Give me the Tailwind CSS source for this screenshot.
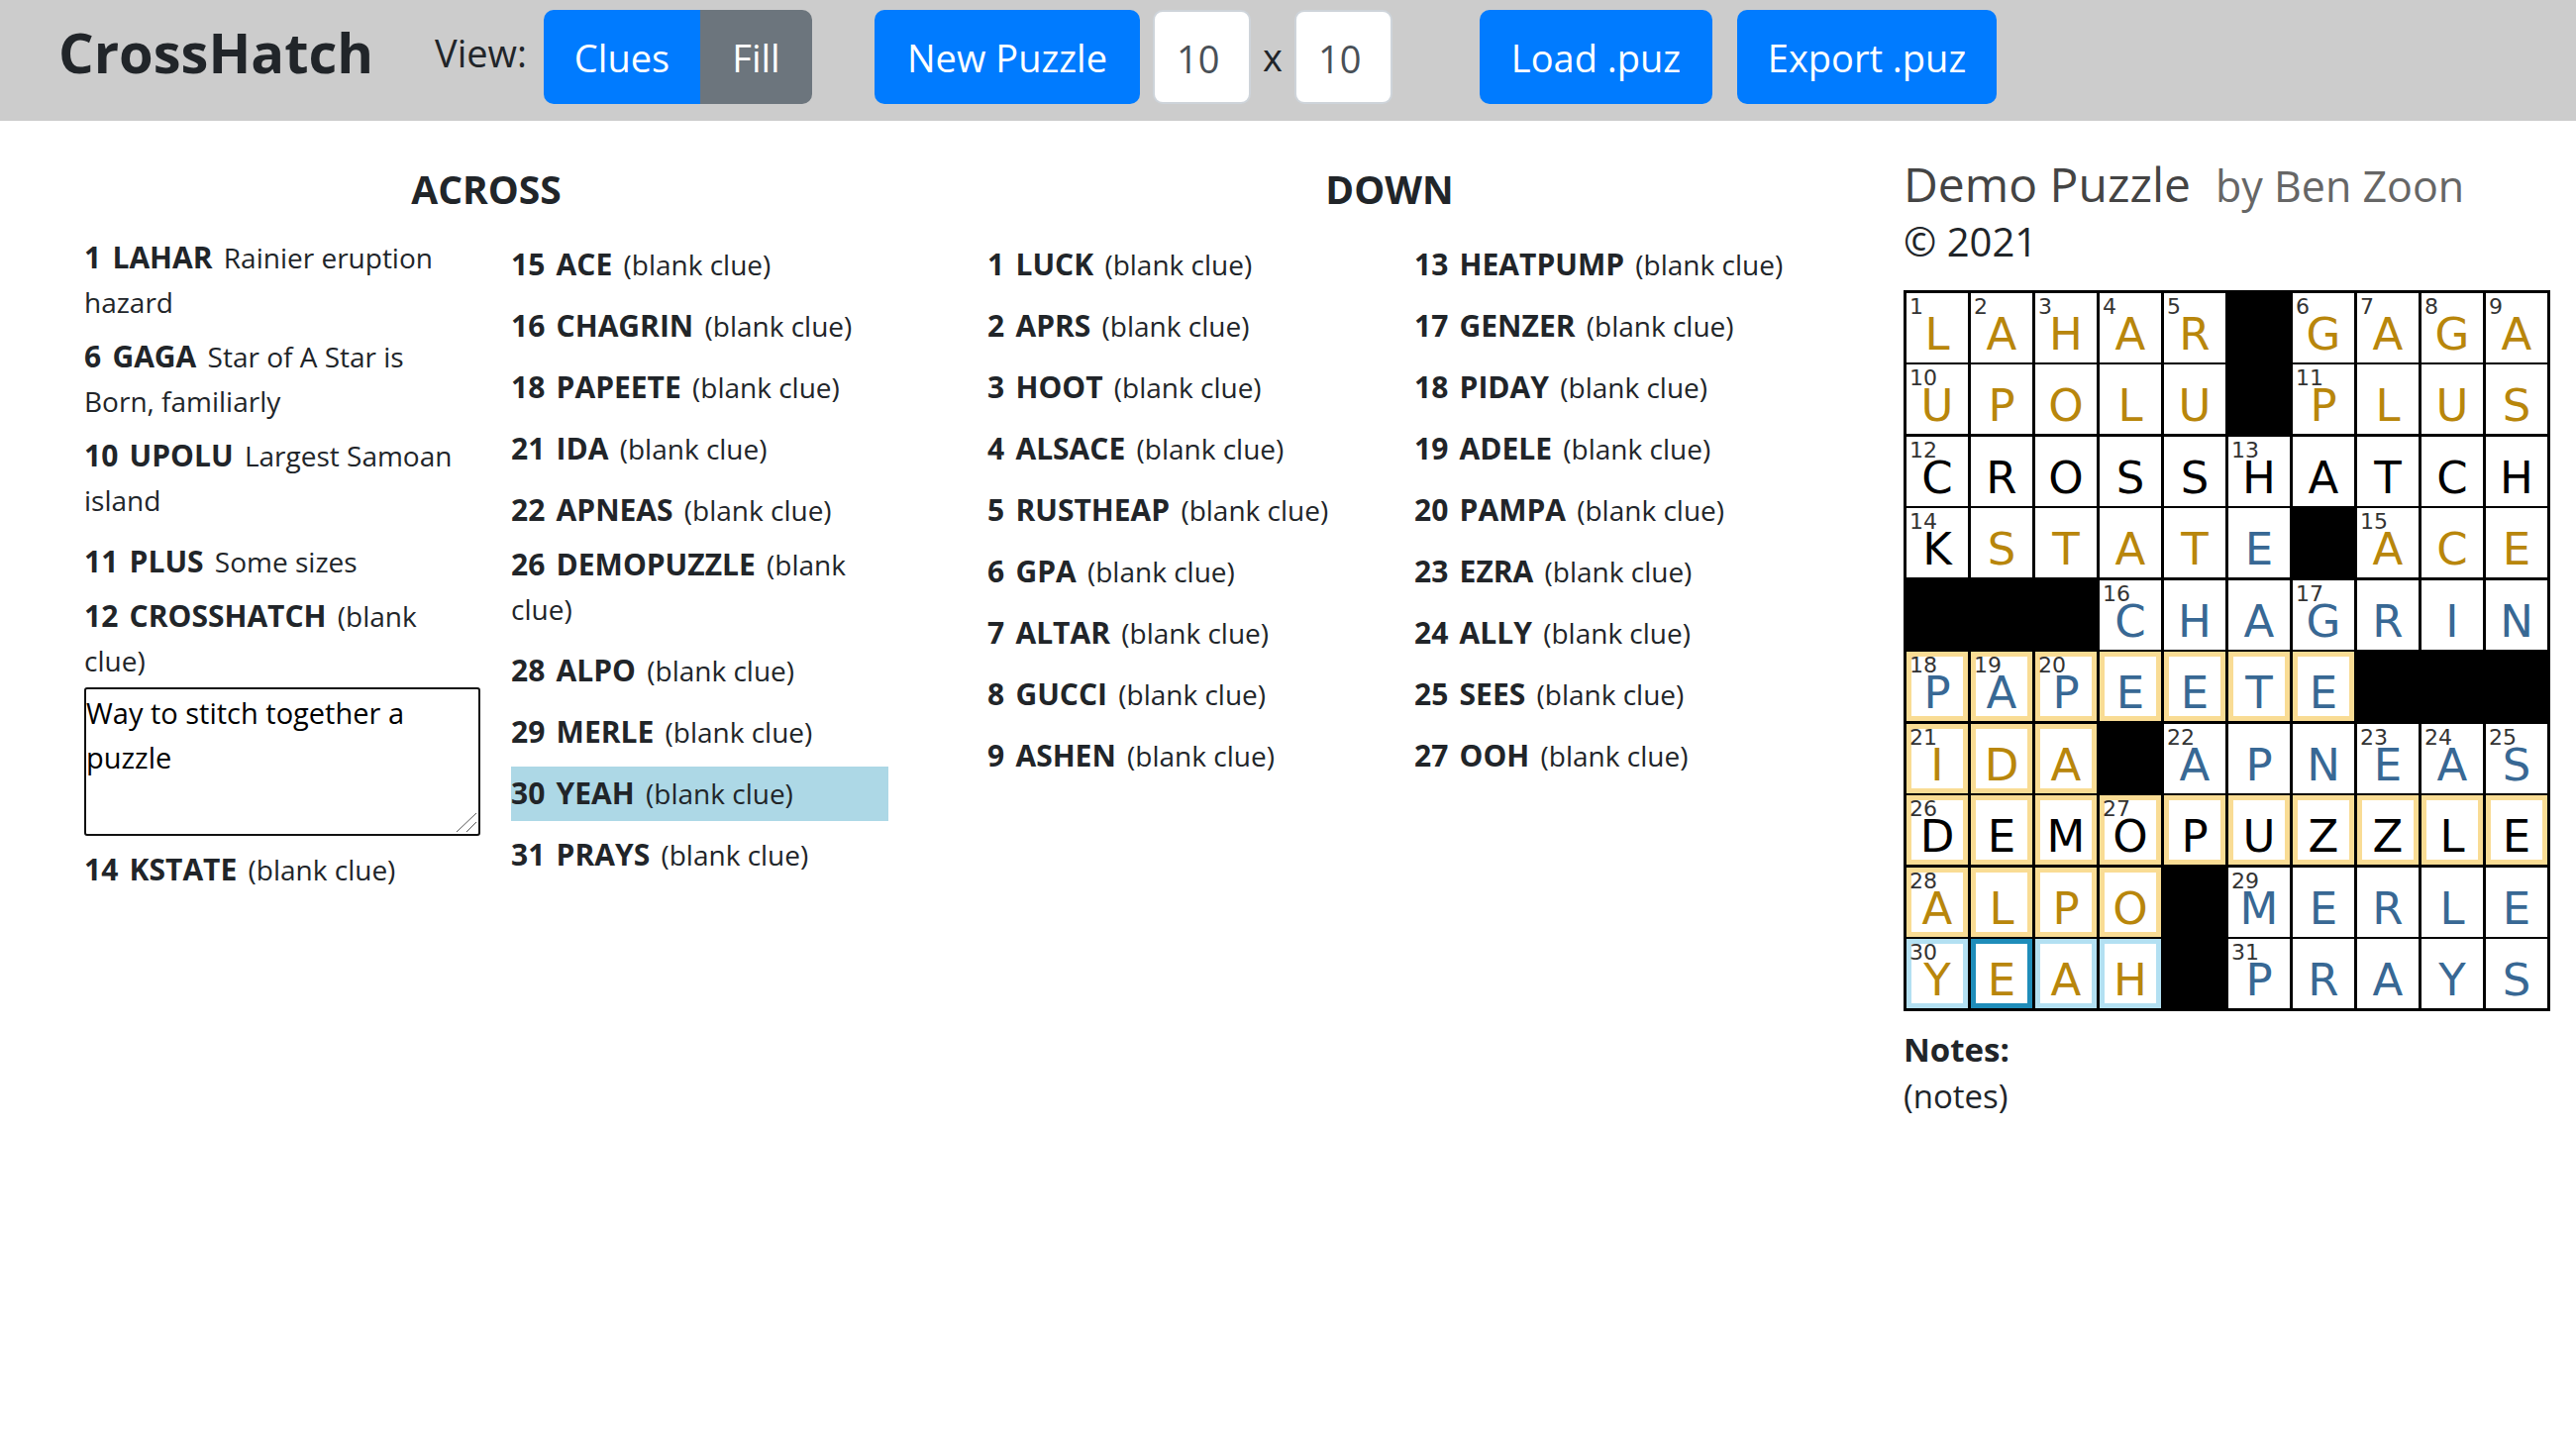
<!DOCTYPE html>
<html lang="en">
<head>
<meta charset="utf-8">
<title>CrossHatch</title>
<script src="https://cdn.jsdelivr.net/npm/@tailwindcss/browser@4"></script>
</head>
<body class="min-h-screen bg-white font-['Open_Sans','Noto_Sans',sans-serif] text-[#212529]">

<header class="flex h-[122px] items-start bg-[#ccc] pt-[10px] pl-[59px] text-[38px]">
  <h1 class="w-[380px] text-[56px] leading-[85px] font-bold">CrossHatch</h1>
  <span id="view-label" class="w-[110px] leading-[86px]">View:</span>
  <div role="group" aria-labelledby="view-label" class="flex h-[95px] overflow-hidden rounded-[10px] text-white">
    <button type="button" class="w-[158px] bg-[#007bff] pt-[2px]">Clues</button>
    <button type="button" class="w-[113px] bg-[#6c757d] pt-[2px]">Fill</button>
  </div>
  <form class="ml-[63px] flex items-start">
    <button type="button" class="h-[95px] w-[268px] rounded-[10px] bg-[#007bff] pt-[2px] text-white">New Puzzle</button>
    <input id="cols" type="text" value="10" aria-label="Columns" class="ml-[13px] h-[95px] w-[99px] rounded-[10px] border-2 border-[#ced4da] bg-white pt-[2px] pl-[22px] text-[#495057]">
    <label for="rows" class="w-[44px] text-center leading-[94px]">x</label>
    <input id="rows" type="text" value="10" class="h-[95px] w-[99px] rounded-[10px] border-2 border-[#ced4da] bg-white pt-[2px] pl-[22px] text-[#495057]">
  </form>
  <button type="button" class="ml-[88px] h-[95px] w-[235px] rounded-[10px] bg-[#007bff] pt-[2px] text-white">Load .puz</button>
  <button type="button" class="ml-[25px] h-[95px] w-[262px] rounded-[10px] bg-[#007bff] pt-[2px] text-white">Export .puz</button>
</header>

<main class="flex items-start pt-[36px] pr-[26px] pb-10 pl-[85px]">
  <div class="grid flex-1 grid-cols-2 gap-[100px] pr-[113px]">
    <section>
      <h2 class="mt-[3px] mb-[17px] text-center text-[39px] leading-[60px] font-bold">ACROSS</h2>
      <div id="across" class="grid grid-cols-2 gap-[50px] text-[28px] leading-[45px]"></div>
    </section>
    <section>
      <h2 class="mt-[3px] mb-[17px] text-center text-[39px] leading-[60px] font-bold">DOWN</h2>
      <div id="down" class="grid grid-cols-2 gap-[50px] text-[28px] leading-[45px]"></div>
    </section>
  </div>

  <aside class="w-[653px] shrink-0">
    <div class="leading-[56px]">
      <h2 class="flex items-baseline gap-[25px]">
        <span class="text-[48px] text-[#444]">Demo Puzzle</span>
        <span class="text-[43px] text-[#666]">by Ben Zoon</span>
      </h2>
      <p class="text-[40px]">© 2021</p>
    </div>
    <table class="mt-[21px] block h-[728px] w-[653px] bg-black p-[3px] font-['DejaVu_Sans',sans-serif]">
      <tbody id="grid" class="flex h-full flex-col justify-between"></tbody>
    </table>
    <div class="mt-[15px] text-[33px] leading-[47px]">
      <h3 class="font-bold">Notes:</h3>
      <p>(notes)</p>
    </div>
  </aside>
</main>

<template id="editor">
  <div class="relative mt-[4px] h-[150px] w-[400px]">
    <textarea aria-label="Clue for 12 across" class="block h-full w-full resize-none rounded-[3px] border-2 border-[#111] bg-white pt-px text-[29px] leading-[45px] text-black outline-none">Way to stitch together a puzzle</textarea>
    <svg class="absolute right-[3px] bottom-[3px]" width="22" height="22" viewBox="0 0 22 22" fill="none" stroke="#555" stroke-width="1"><path d="M1 21L21 2M11 21L21 11"/></svg>
  </div>
</template>

<script>
const blank = '(blank clue)';
const clues = {
  across: [
    [[1, 'LAHAR', 'Rainier eruption hazard'], [6, 'GAGA', 'Star of A Star is Born, familiarly'], [10, 'UPOLU', 'Largest Samoan island'], [11, 'PLUS', 'Some sizes'], [12, 'CROSSHATCH'], [14, 'KSTATE']],
    [[15, 'ACE'], [16, 'CHAGRIN'], [18, 'PAPEETE'], [21, 'IDA'], [22, 'APNEAS'], [26, 'DEMOPUZZLE'], [28, 'ALPO'], [29, 'MERLE'], [30, 'YEAH'], [31, 'PRAYS']]
  ],
  down: [
    [[1, 'LUCK'], [2, 'APRS'], [3, 'HOOT'], [4, 'ALSACE'], [5, 'RUSTHEAP'], [6, 'GPA'], [7, 'ALTAR'], [8, 'GUCCI'], [9, 'ASHEN']],
    [[13, 'HEATPUMP'], [17, 'GENZER'], [18, 'PIDAY'], [19, 'ADELE'], [20, 'PAMPA'], [23, 'EZRA'], [24, 'ALLY'], [25, 'SEES'], [27, 'OOH']]
  ]
};
// Clues that take two lines fill their row; the others are centred in it.
const tall = ['LAHAR', 'GAGA', 'UPOLU', 'CROSSHATCH', 'DEMOPUZZLE'];
for (const dir of ['across', 'down']) {
  for (const column of clues[dir]) {
    const ul = document.createElement('ul');
    ul.className = 'flex flex-col';
    for (const [n, word, clue = blank] of column) {
      const li = document.createElement('li');
      li.className = tall.includes(word) ? 'mb-[10px]' : 'mt-[2px] mb-[5px] py-[5px]';
      if (word === 'YEAH') li.classList.add('bg-[#add8e6]');
      li.innerHTML = `<b class="mr-[4px] text-[30px] leading-[30px] font-bold">${n}</b> <b class="mr-[4px] text-[30px] leading-[30px] font-bold">${word}</b> ${clue}`;
      if (word === 'CROSSHATCH') {
        li.className = 'mb-[5px]';
        li.append(document.getElementById('editor').content.cloneNode(true));
      }
      ul.append(li);
    }
    document.getElementById(dir).append(ul);
  }
}

const rows = ['LAHAR#GAGA', 'UPOLU#PLUS', 'CROSSHATCH', 'KSTATE#ACE', '###CHAGRIN', 'PAPEETE###', 'IDA#APNEAS', 'DEMOPUZZLE', 'ALPO#MERLE', 'YEAH#PRAYS'];
// k: certain letter, g: suggested, b: filled by the solver
const inks = ['ggggg.gggg', 'ggggg.gggg', 'kkkkkkkkkk', 'kggggb.ggg', '...bbbbbbb', 'bbbbbbb...', 'ggg.bbbbbb', 'kkkkkkkkkk', 'gggg.bbbbb', 'gggg.bbbbb'];
// y: symmetric entry, l: current entry, c: cursor
const marks = ['', '', '', '', '', 'yyyyyyy', 'yyy', 'yyyyyyyyyy', 'yyyy', 'lcll'];
const ink = { k: 'text-black', g: 'text-[#b8860b]', b: 'text-[#386894]' };
const mark = {
  y: 'inset-ring-[5px] inset-ring-[#f9dc94]',
  l: 'inset-ring-[5px] inset-ring-[#b3e0f2]',
  c: 'inset-ring-[5px] inset-ring-[#1f8dba]'
};
let count = 0;
const open = (r, c) => rows[r] && rows[r][c] && rows[r][c] !== '#';
document.getElementById('grid').innerHTML = rows.map((row, r) =>
  '<tr class="flex gap-[3px]">' + [...row].map((ch, c) => {
    if (ch === '#') return '<td class="h-[70px] w-[62px] bg-black"></td>';
    const starts = (!open(r, c - 1) && open(r, c + 1)) || (!open(r - 1, c) && open(r + 1, c));
    const num = starts ? `<span class="absolute top-[3px] left-[3px] text-[22px] leading-[22px] text-[#333]">${++count}</span>` : '';
    return `<td class="relative h-[70px] w-[62px] bg-white p-0 pt-[16px] text-center text-[45px] leading-[52px] ${ink[inks[r][c]]} ${mark[marks[r][c]] || ''}">${num}${ch}</td>`;
  }).join('') + '</tr>').join('');
</script>
</body>
</html>
